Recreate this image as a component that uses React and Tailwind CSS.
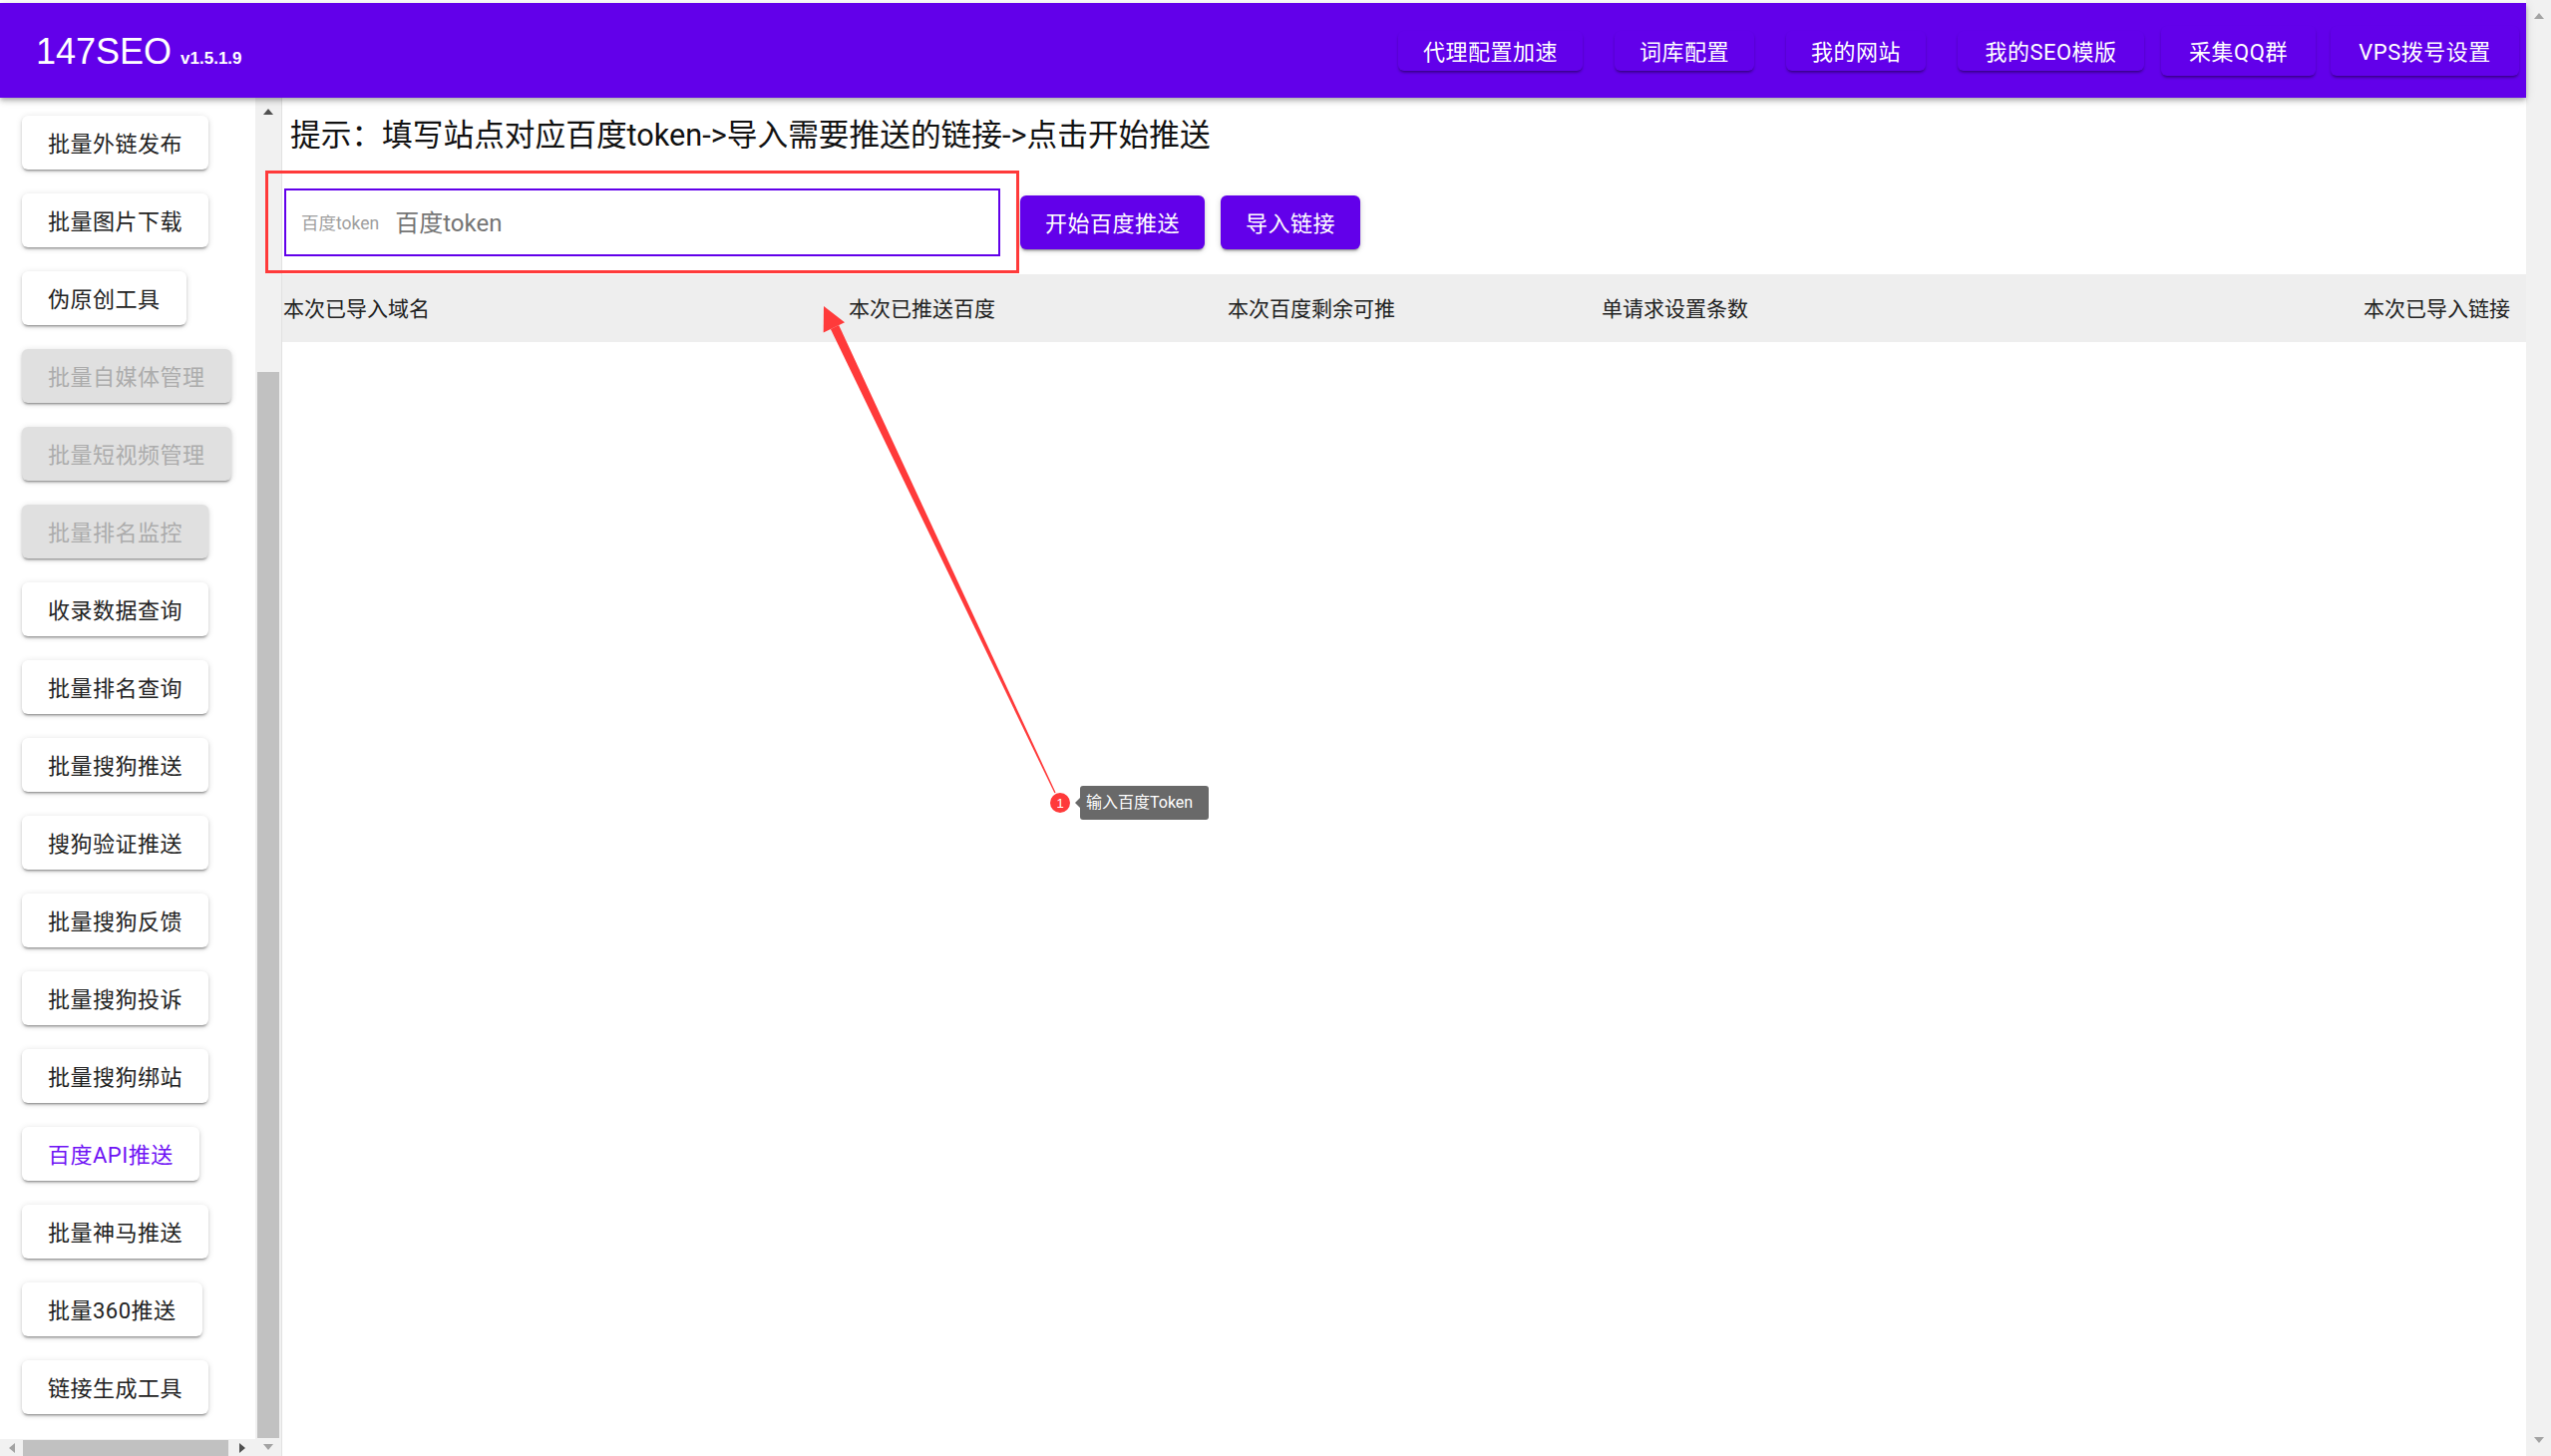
import React from "react";

const navItems = [
  { label: "代理配置加速", w: "w-[185px]", h: "h-[40px]" },
  { label: "词库配置", w: "w-[140px]", h: "h-[40px]" },
  { label: "我的网站", w: "w-[140px]", h: "h-[40px]" },
  { label: "我的SEO模版", w: "w-[187px]", h: "h-[40px]" },
];

const navItems2 = [
  { label: "采集QQ群", w: "w-[155px]", h: "h-[50px]" },
  { label: "VPS拨号设置", w: "w-[189px]", h: "h-[50px]" },
];

const menu = [
  { label: "批量外链发布" },
  { label: "批量图片下载" },
  { label: "伪原创工具" },
  { label: "批量自媒体管理", disabled: true },
  { label: "批量短视频管理", disabled: true },
  { label: "批量排名监控", disabled: true },
  { label: "收录数据查询" },
  { label: "批量排名查询" },
  { label: "批量搜狗推送" },
  { label: "搜狗验证推送" },
  { label: "批量搜狗反馈" },
  { label: "批量搜狗投诉" },
  { label: "批量搜狗绑站" },
  { label: "百度API推送", active: true },
  { label: "批量神马推送" },
  { label: "批量360推送" },
  { label: "链接生成工具" },
];

const btnShadow =
  "shadow-[0_3px_2px_-2px_rgba(0,0,0,0.3),0_2px_3px_0_rgba(0,0,0,0.16),0_1px_7px_0_rgba(0,0,0,0.12)]";

function Tri({ dir = "up", color = "#505050" }) {
  const pts = {
    up: "0,6 5,0 10,6",
    down: "0,0 10,0 5,6",
    left: "6,0 6,10 0,5",
    right: "0,0 0,10 6,5",
  }[dir];
  const vertical = dir === "up" || dir === "down";
  return (
    <svg width={vertical ? 10 : 6} height={vertical ? 6 : 10} viewBox={vertical ? "0 0 10 6" : "0 0 6 10"}>
      <polygon points={pts} fill={color} />
    </svg>
  );
}

export default function App() {
  return (
    <div className="relative flex h-screen w-full overflow-hidden bg-white font-['Roboto','Noto_Sans_CJK_SC',sans-serif]">
      <div className="flex min-w-0 flex-1 flex-col pt-[3px]">
        <header className="relative z-10 flex h-[95px] shrink-0 items-center bg-[#6200ea] pl-[36px] pr-[7px] shadow-[0_2px_4px_-1px_rgba(0,0,0,0.2),0_4px_5px_0_rgba(0,0,0,0.14),0_1px_10px_0_rgba(0,0,0,0.12)]">
          <div className="flex items-baseline pt-[3px] text-white font-['Liberation_Sans',Arial,sans-serif]">
            <span className="text-[36px] leading-none">147SEO</span>
            <span className="ml-[9px] text-[17px] font-bold leading-none">v1.5.1.9</span>
          </div>
          <nav className="ml-auto flex items-center">
            <div className="flex items-center gap-[32px]">
              {navItems.map((n) => (
                <button
                  key={n.label}
                  className={`${n.w} ${n.h} flex items-center justify-center rounded-[6px] bg-[#6200ea] pt-[3px] text-[22px] tracking-[0.5px] text-white shadow-[0_3px_3px_-2px_rgba(0,0,0,0.35),0_2px_3px_0_rgba(0,0,0,0.2)]`}
                >
                  {n.label}
                </button>
              ))}
            </div>
            <div className="ml-[17px] flex items-center gap-[15px]">
              {navItems2.map((n) => (
                <button
                  key={n.label}
                  className={`${n.w} ${n.h} flex items-center justify-center rounded-[6px] bg-[#6200ea] pt-[3px] text-[22px] tracking-[0.5px] text-white shadow-[0_3px_3px_-2px_rgba(0,0,0,0.35),0_2px_3px_0_rgba(0,0,0,0.2)]`}
                >
                  {n.label}
                </button>
              ))}
            </div>
          </nav>
        </header>

        <div className="flex min-h-0 flex-1">
          {/* sidebar */}
          <aside className="flex w-[282px] shrink-0">
            <div className="flex w-[256px] flex-col">
              <div className="flex min-h-0 flex-1 flex-col items-start gap-[24px] overflow-hidden pl-[22px] pt-[18px]">
                {menu.map((m) => (
                  <button
                    key={m.label}
                    className={`flex h-[54px] shrink-0 items-center rounded-[6px] px-[26px] pt-[3px] text-[22px] tracking-[0.5px] ${btnShadow} ${
                      m.disabled
                        ? "bg-[#e0e0e0] text-[#acacac]"
                        : m.active
                        ? "bg-white text-[#7014f5]"
                        : "bg-white text-[#222]"
                    }`}
                  >
                    {m.label}
                  </button>
                ))}
              </div>
              <div className="flex h-[17px] shrink-0 items-start bg-[#f1f1f1]">
                <div className="flex h-full w-[23px] items-center justify-center">
                  <Tri dir="left" color="#a3a3a3" />
                </div>
                <div className="mt-[1px] h-full w-[206px] bg-[#c1c1c1]" />
                <div className="flex h-full flex-1 items-center justify-center">
                  <Tri dir="right" color="#505050" />
                </div>
              </div>
            </div>
            <div className="flex w-[26px] flex-col bg-[#f1f1f1]">
              <div className="flex h-[28px] shrink-0 items-center justify-center">
                <Tri dir="up" />
              </div>
              <div className="h-[247px] shrink-0" />
              <div className="mx-[2px] flex-1 bg-[#c1c1c1]" />
              <div className="flex h-[18px] shrink-0 items-center justify-center">
                <Tri dir="down" color="#a3a3a3" />
              </div>
            </div>
          </aside>

          {/* content */}
          <main className="flex min-w-0 flex-1 flex-col border-l border-[#e2e2e2]">
            <p className="ml-[8px] mt-[18px] text-[30.7px] leading-[40px] text-[#111]">
              提示：填写站点对应百度token-&gt;导入需要推送的链接-&gt;点击开始推送
            </p>
            <div className="ml-[2px] mt-[33px] flex items-center">
              <div className="flex h-[68px] w-[718px] items-center border-2 border-[#6200ea] pl-[15px] pt-[2px]">
                <span className="text-[17.5px] text-[#9e9e9e]">百度token</span>
                <input
                  className="ml-[16px] flex-1 bg-transparent text-[24px] text-[#757575] outline-none placeholder:text-[#757575]"
                  placeholder="百度token"
                />
              </div>
              <div className="ml-[20px] flex items-center gap-[16px]">
                <button className={`flex h-[54px] items-center rounded-[6px] bg-[#6200ea] px-[25px] pt-[3px] text-[22px] tracking-[0.5px] text-white ${btnShadow}`}>
                  开始百度推送
                </button>
                <button className={`flex h-[54px] items-center rounded-[6px] bg-[#6200ea] px-[25px] pt-[3px] text-[22px] tracking-[0.5px] text-white ${btnShadow}`}>
                  导入链接
                </button>
              </div>
            </div>
            <div className="mt-[18px] flex h-[68px] items-center bg-[#eeeeee] pl-[1px] pr-[16px] pt-[3px] text-[21px] text-[#222]">
              <div className="w-[567px]">本次已导入域名</div>
              <div className="w-[380px]">本次已推送百度</div>
              <div className="w-[375px]">本次百度剩余可推</div>
              <div className="flex-1">单请求设置条数</div>
              <div>本次已导入链接</div>
            </div>
          </main>
        </div>
      </div>

      {/* page scrollbar */}
      <div className="flex w-[25px] shrink-0 flex-col items-center justify-between bg-[#f1f1f1] py-[13px]">
        <Tri dir="up" color="#a3a3a3" />
        <Tri dir="down" color="#a3a3a3" />
      </div>

      {/* annotation overlay */}
      <div className="pointer-events-none absolute left-[266px] top-[171px] h-[103px] w-[756px] border-[3px] border-[#ff3a3a]" />
      <svg className="pointer-events-none absolute left-0 top-0" width="2558" height="1460">
        <polygon points="841.1,326.1 1058.6,794.7 1057.4,795.3 832.9,329.9" fill="#ff3a3a" />
        <polygon points="826,307 825.7,333.5 847,323.3" fill="#ff3a3a" />
      </svg>
      <div className="pointer-events-none absolute left-[1053px] top-[795px] flex h-[20px] w-[20px] items-center justify-center rounded-full bg-[#ff3a3a] text-[13px] leading-none text-white font-['Liberation_Sans',Arial,sans-serif]">
        1
      </div>
      <div className="pointer-events-none absolute left-[1083px] top-[788px] flex h-[34px] w-[129px] items-center rounded-[3px] bg-[#696969] pl-[6px] text-[16px] text-white">
        <span className="absolute left-[-5px] top-[12px] h-0 w-0 border-y-[5px] border-r-[5px] border-y-transparent border-r-[#696969]" />
        输入百度Token
      </div>
    </div>
  );
}
